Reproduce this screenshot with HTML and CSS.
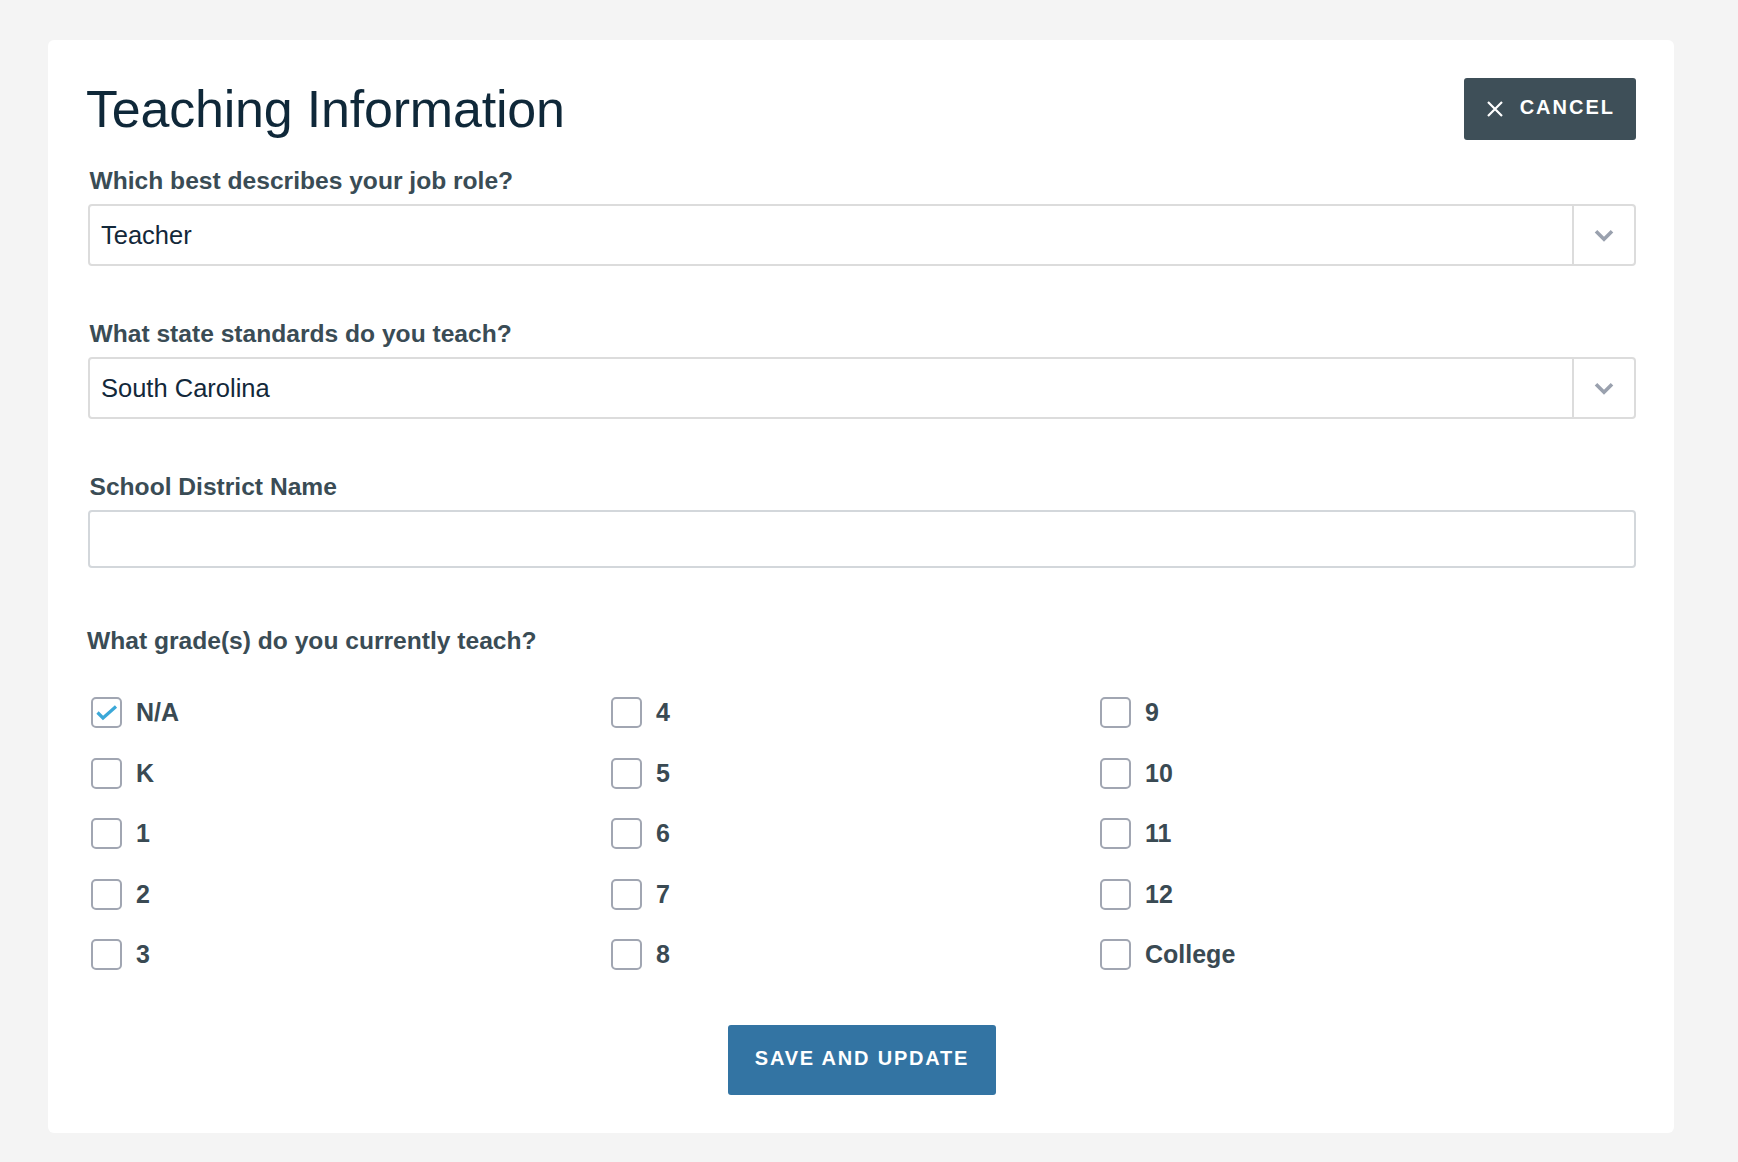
FILE: index.html
```html
<!DOCTYPE html>
<html lang="en">
<head>
<meta charset="utf-8">
<title>Teaching Information</title>
<link rel="stylesheet" href="styles.css">
</head>
<body>
<main class="card">
  <header class="card-head">
    <h1 class="title">Teaching Information</h1>
    <button class="btn-cancel" type="button">
      <svg class="icon-x" viewBox="0 0 16 16" aria-hidden="true"><path d="M1 1L15 15M15 1L1 15"/></svg>
      <span class="btn-text">CANCEL</span>
    </button>
  </header>

  <div class="field">
    <label class="field-label">Which best describes your job role?</label>
    <div class="select">
      <span class="select-value">Teacher</span>
      <span class="select-arrow"><svg viewBox="0 0 20 13" aria-hidden="true"><path d="M2 2.2L10 10.2L18 2.2"/></svg></span>
    </div>
  </div>

  <div class="field">
    <label class="field-label">What state standards do you teach?</label>
    <div class="select">
      <span class="select-value">South Carolina</span>
      <span class="select-arrow"><svg viewBox="0 0 20 13" aria-hidden="true"><path d="M2 2.2L10 10.2L18 2.2"/></svg></span>
    </div>
  </div>

  <div class="field field-input">
    <label class="field-label" for="district">School District Name</label>
    <input class="input" id="district" type="text">
  </div>

  <p class="group-label">What grade(s) do you currently teach?</p>
  <div class="grades">
    <div class="grade"><span class="box"><svg viewBox="0 0 27 27" aria-hidden="true"><path d="M4.5 13.5L10 19L23 7.5"/></svg></span>N/A</div>
    <div class="grade"><span class="box"></span>K</div>
    <div class="grade"><span class="box"></span>1</div>
    <div class="grade"><span class="box"></span>2</div>
    <div class="grade"><span class="box"></span>3</div>
    <div class="grade"><span class="box"></span>4</div>
    <div class="grade"><span class="box"></span>5</div>
    <div class="grade"><span class="box"></span>6</div>
    <div class="grade"><span class="box"></span>7</div>
    <div class="grade"><span class="box"></span>8</div>
    <div class="grade"><span class="box"></span>9</div>
    <div class="grade"><span class="box"></span>10</div>
    <div class="grade"><span class="box"></span>11</div>
    <div class="grade"><span class="box"></span>12</div>
    <div class="grade"><span class="box"></span>College</div>
  </div>

  <div class="actions">
    <button class="btn-save" type="button">SAVE AND UPDATE</button>
  </div>
</main>
</body>
</html>
```
FILE: styles.css
```css
* { box-sizing: border-box; }

body {
  margin: 0;
  padding: 40px 0 28px 48px;
  background: #f4f4f4;
  font-family: "Liberation Sans", Arial, sans-serif;
}

.card {
  width: 1626px;
  background: #ffffff;
  border-radius: 6px;
  padding: 38px 38px 38px 40px;
}

.card-head {
  display: flex;
  justify-content: space-between;
  align-items: center;
  height: 62px;
  margin-bottom: 26px;
}

.title {
  margin: 0 0 0 -2px;
  font-size: 52px;
  line-height: 62px;
  font-weight: 400;
  letter-spacing: -0.2px;
  color: #0f2839;
}

.btn-cancel {
  display: flex;
  align-items: center;
  gap: 17px;
  height: 62px;
  padding: 0 21px 0 23px;
  background: #3e4f58;
  color: #ffffff;
  border: 0;
  border-radius: 3px;
  font: 700 20px/1 "Liberation Sans", Arial, sans-serif;
  letter-spacing: 2px;
}

.btn-text { margin-bottom: 5px; }

.icon-x {
  width: 16px;
  height: 16px;
  fill: none;
  stroke: #ffffff;
  stroke-width: 2.2;
}

.field { margin-bottom: 53px; }
.field-input { margin-bottom: 58px; }

.field-label {
  display: block;
  margin: 0 0 8px 1.5px;
  font-size: 24.6px;
  line-height: 30px;
  font-weight: 700;
  color: #3a4c55;
}

.select {
  display: flex;
  height: 62px;
  border: 2px solid #dcdcdc;
  border-radius: 4px;
}

.select-value {
  flex: 1;
  display: flex;
  align-items: center;
  padding-left: 11px;
  font-size: 25.5px;
  color: #13283a;
}

.select-arrow {
  width: 62px;
  border-left: 2px solid #dcdcdc;
  display: flex;
  align-items: center;
  justify-content: center;
}

.select-arrow svg {
  width: 20px;
  height: 13px;
  fill: none;
  stroke: #9aa1ae;
  stroke-width: 3.6;
}

.input {
  display: block;
  width: 100%;
  height: 58px;
  margin: 0;
  border: 2px solid #d3d7db;
  border-radius: 4px;
  background: #ffffff;
  outline: none;
}

.group-label {
  margin: 0 0 41px -1px;
  font-size: 24.6px;
  line-height: 30px;
  font-weight: 700;
  color: #3a4c55;
}

.grades {
  display: grid;
  grid-template-columns: 520px 489px 1fr;
  grid-template-rows: repeat(5, 31px);
  grid-auto-flow: column;
  row-gap: 29.5px;
  padding-left: 3px;
}

.grade {
  display: flex;
  align-items: center;
  gap: 14px;
  font-size: 25px;
  font-weight: 700;
  color: #3a4a53;
}

.box {
  flex: none;
  width: 31px;
  height: 31px;
  border: 2px solid #a1a6b2;
  border-radius: 5px;
  display: flex;
  align-items: center;
  justify-content: center;
}

.box svg {
  width: 27px;
  height: 27px;
  fill: none;
  stroke: #3ba8d8;
  stroke-width: 3.2;
}

.actions {
  display: flex;
  justify-content: center;
  margin-top: 55px;
}

.btn-save {
  height: 70px;
  padding: 0 27px 5px 27px;
  background: #3374a3;
  color: #ffffff;
  border: 0;
  border-radius: 3px;
  font: 700 20px/1 "Liberation Sans", Arial, sans-serif;
  letter-spacing: 1.8px;
}
```
